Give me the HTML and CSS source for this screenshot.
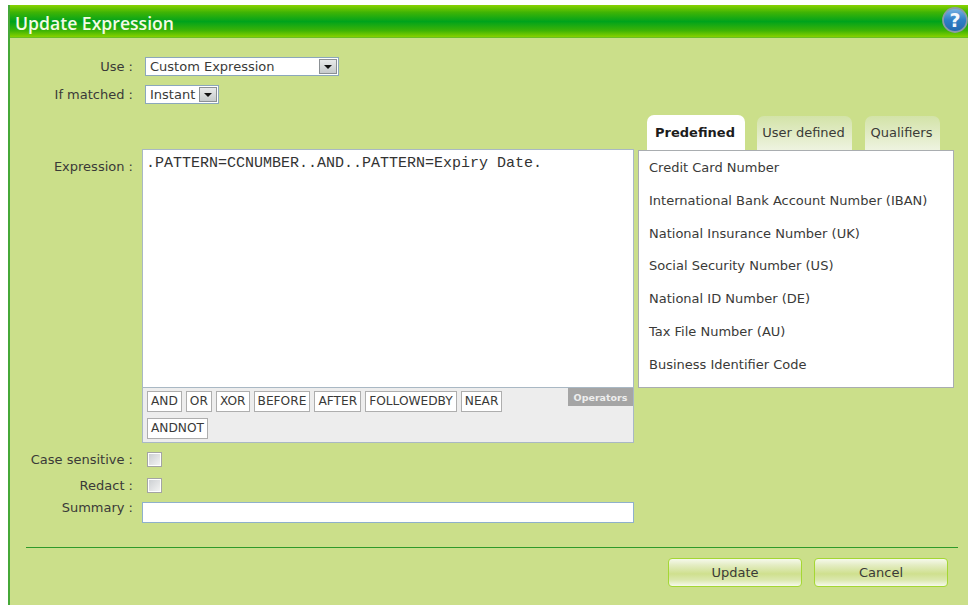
FILE: index.html
```html
<!DOCTYPE html>
<html lang="en">
<head>
<meta charset="utf-8">
<title>Update Expression</title>
<link rel="stylesheet" href="styles.css">
</head>
<body>
<div class="dialog">
  <header class="titlebar">
    <h1 class="title">Update Expression</h1>
    <svg class="help" width="26" height="26" viewBox="0 0 26 26" aria-label="Help">
      <defs>
        <linearGradient id="helpFill" x1="0" y1="0" x2="0" y2="1">
          <stop offset="0" stop-color="#7db4e4"/>
          <stop offset=".5" stop-color="#2f7fc6"/>
          <stop offset="1" stop-color="#2468ae"/>
        </linearGradient>
      </defs>
      <circle cx="13" cy="13" r="12" fill="url(#helpFill)" stroke="#8a9aa6" stroke-width="1.8"/>
      <text x="13" y="20" text-anchor="middle" class="help-mark">?</text>
    </svg>
  </header>
  <div class="content">
    <div class="form">
      <div class="row row-select">
        <span class="label">Use :</span>
        <div class="select select-wide"><span class="select-text">Custom Expression</span><span class="arrow"></span></div>
      </div>
      <div class="row row-select row-matched">
        <span class="label">If matched :</span>
        <div class="select"><span class="select-text">Instant</span><span class="arrow"></span></div>
      </div>
      <div class="row row-expression">
        <span class="label label-expression">Expression :</span>
        <div class="editor">
          <div class="expression">.PATTERN=CCNUMBER..AND..PATTERN=Expiry Date.</div>
          <div class="operators">
            <span class="operators-tag">Operators</span>
            <span class="op">AND</span><span class="op">OR</span><span class="op">XOR</span><span class="op">BEFORE</span><span class="op">AFTER</span><span class="op">FOLLOWEDBY</span><span class="op">NEAR</span><span class="op">ANDNOT</span>
          </div>
        </div>
      </div>
      <div class="row row-check row-case">
        <span class="label">Case sensitive :</span>
        <span class="check"></span>
      </div>
      <div class="row row-check row-redact">
        <span class="label">Redact :</span>
        <span class="check"></span>
      </div>
      <div class="row row-summary">
        <span class="label label-summary">Summary :</span>
        <div class="summary"></div>
      </div>
    </div>
    <aside class="patterns">
      <div class="tabs">
        <span class="tab tab-active">Predefined</span>
        <span class="tab tab-user">User defined</span>
        <span class="tab tab-qual">Qualifiers</span>
      </div>
      <ul class="pattern-list">
        <li>Credit Card Number</li>
        <li>International Bank Account Number (IBAN)</li>
        <li>National Insurance Number (UK)</li>
        <li>Social Security Number (US)</li>
        <li>National ID Number (DE)</li>
        <li>Tax File Number (AU)</li>
        <li>Business Identifier Code</li>
      </ul>
    </aside>
  </div>
  <footer class="footer">
    <button class="btn" type="button">Update</button>
    <button class="btn" type="button">Cancel</button>
  </footer>
</div>
</body>
</html>
```
FILE: styles.css
```css
html, body {
  margin: 0;
  height: 100%;
  background: #fff;
  overflow: hidden;
}

body {
  font-family: "DejaVu Sans", Verdana, sans-serif;
  font-size: 13px;
  color: #3a3a38;
}

.dialog {
  position: relative;
  box-sizing: border-box;
  width: 960px;
  height: 600px;
  margin: 5px 0 0 8px;
  border-left: 2px solid #46a838;
  background: #cbdf8a;
  display: flex;
  flex-direction: column;
}

.titlebar {
  box-sizing: border-box;
  height: 33px;
  padding: 5px 0 0 5px;
  background: linear-gradient(#8ad200 0, #3fb405 22%, #00a31c 50%, #3fb405 78%, #84d000 96%, #5cb53a 100%);
}

.title {
  margin: 0;
  font-family: "Open Sans", "DejaVu Sans", sans-serif;
  font-size: 17.6px;
  line-height: 27px;
  font-weight: 600;
  color: #f4fbe6;
}

.help {
  position: absolute;
  top: 2px;
  right: 0;
}

.help-mark {
  font-family: "DejaVu Sans", sans-serif;
  font-size: 19px;
  font-weight: 700;
  fill: #f4f8fc;
}

.content {
  display: flex;
  align-items: flex-start;
  gap: 4px;
  flex: none;
  height: 509px;
}

.form {
  width: 624px;
  flex: none;
  padding-top: 19px;
}

.row {
  display: flex;
  align-items: center;
}

.label {
  width: 123px;
  flex: none;
  text-align: right;
  white-space: nowrap;
}

.row-select {
  height: 18px;
  gap: 12px;
}

.row-matched {
  margin-top: 10px;
}

.select {
  box-sizing: border-box;
  height: 19px;
  display: flex;
  align-items: center;
  gap: 4px;
  padding: 0 1px 0 4px;
  background: #fff;
  border: 1px solid #8ba7bc;
}

.select-wide {
  width: 194px;
  justify-content: space-between;
}

.select-text {
  white-space: nowrap;
}

.arrow {
  box-sizing: border-box;
  width: 18px;
  height: 15px;
  flex: none;
  display: flex;
  align-items: center;
  justify-content: center;
  background: linear-gradient(#e8eaea, #c6cacc);
  border: 1px solid #8b9094;
}

.arrow::after {
  content: "";
  width: 0;
  height: 0;
  margin-top: 2px;
  border: 4px solid transparent;
  border-top-color: #111;
  border-bottom-width: 0;
}

.row-expression {
  align-items: flex-start;
  gap: 9px;
  margin-top: 46px;
}

.label-expression {
  margin-top: 10px;
}

.editor {
  box-sizing: border-box;
  width: 492px;
  border: 1px solid #a9b8c4;
  background: #fff;
}

.expression {
  box-sizing: border-box;
  height: 238px;
  padding: 6px 3px;
  font-family: "Liberation Mono", "Courier New", monospace;
  font-size: 15px;
  line-height: 15px;
  color: #333;
  border-bottom: 1px solid #a9b8c4;
}

.operators {
  position: relative;
  box-sizing: border-box;
  height: 54px;
  padding: 3px 100px 0 4px;
  background: #ededed;
  display: flex;
  flex-wrap: wrap;
  align-content: flex-start;
  gap: 6px 4px;
}

.operators-tag {
  position: absolute;
  top: 0;
  right: 0;
  width: 65px;
  height: 18px;
  background: #a5a5a5;
  color: #eee;
  font-size: 9.5px;
  font-weight: 700;
  line-height: 19px;
  text-align: center;
}

.op {
  box-sizing: border-box;
  height: 21px;
  padding: 0 3px;
  background: #fff;
  border: 1px solid #aeaeae;
  font-size: 12.2px;
  line-height: 19px;
}

.row-check {
  gap: 14px;
  height: 15px;
}

.row-case {
  margin-top: 9px;
}

.row-redact {
  margin-top: 11px;
}

.check {
  box-sizing: border-box;
  width: 15px;
  height: 15px;
  flex: none;
  background: linear-gradient(135deg, #c9ccd0, #f6f6f6);
  border: 1px solid #a4a4a4;
  box-shadow: inset 0 0 0 1px #fff;
}

.row-summary {
  align-items: flex-start;
  gap: 9px;
  margin-top: 9px;
}

.label-summary {
  margin-top: -2px;
}

.summary {
  box-sizing: border-box;
  width: 492px;
  height: 21px;
  background: #fff;
  border: 1px solid #8fb0cc;
}

.patterns {
  width: 316px;
  flex: none;
  padding-top: 77px;
}

.tabs {
  display: flex;
  height: 35px;
  padding-left: 9px;
  align-items: flex-end;
}

.tab {
  box-sizing: border-box;
  height: 34px;
  flex: none;
  padding-right: 2px;
  border-radius: 7px 7px 0 0;
  background: linear-gradient(#d3e3a8, #eef3e0);
  text-align: center;
  line-height: 34px;
  white-space: nowrap;
}

.tab-active {
  width: 98px;
  height: 35px;
  line-height: 35px;
  background: #fff;
  font-weight: 700;
  color: #1c1c1c;
}

.tab-user {
  width: 95px;
  margin-left: 12px;
}

.tab-qual {
  width: 75px;
  margin-left: 13px;
}

.pattern-list {
  box-sizing: border-box;
  height: 238px;
  margin: 0;
  padding: 0 0 0 10px;
  list-style: none;
  background: #fff;
  border: 1px solid #a9adb0;
}

.pattern-list li {
  height: 32.8px;
  line-height: 33px;
  white-space: nowrap;
}

.footer {
  margin: 0 10px 0 16px;
  padding: 10px 10px 0 0;
  border-top: 1px solid #2f9a2a;
  display: flex;
  justify-content: flex-end;
  gap: 12px;
}

.btn {
  box-sizing: border-box;
  width: 134px;
  height: 29px;
  padding: 0;
  border: 1px solid #a4d733;
  border-radius: 4px;
  background: linear-gradient(#f6f9ec 0, #e4edc4 22%, #cfe08e 55%, #dbe8ae 78%, #f6f9ec 100%);
  font: inherit;
  color: #3a3a38;
}
```
